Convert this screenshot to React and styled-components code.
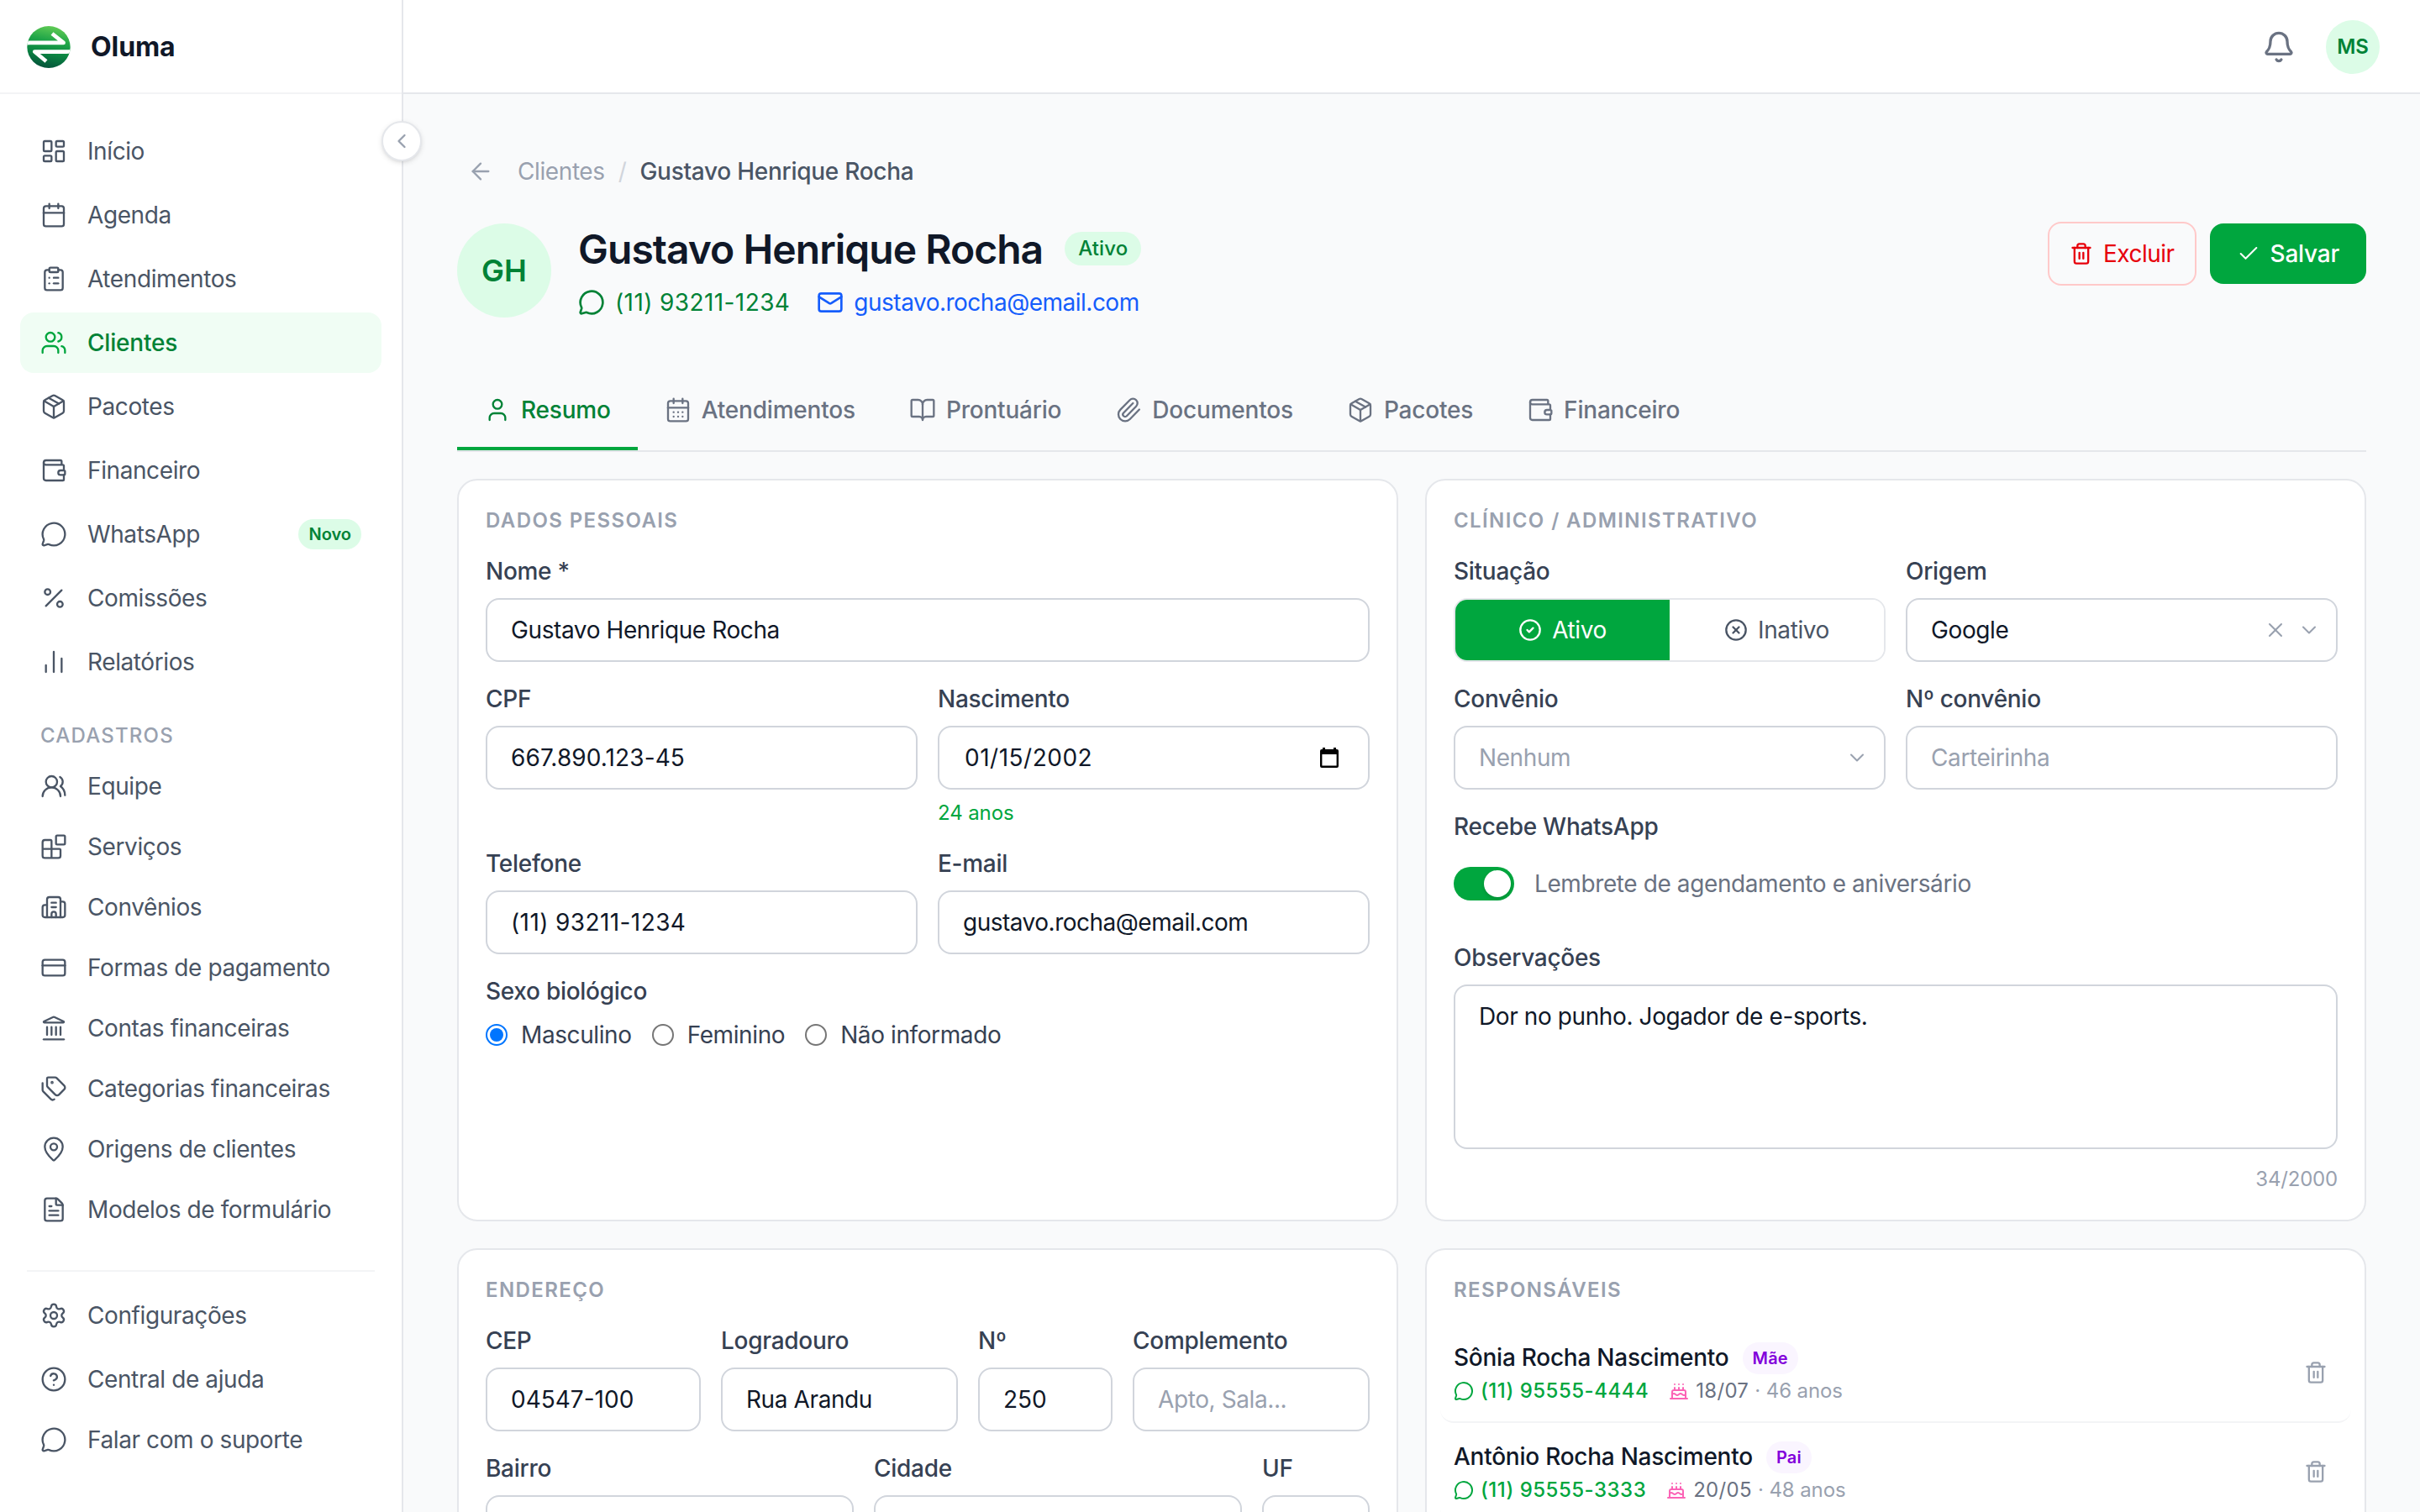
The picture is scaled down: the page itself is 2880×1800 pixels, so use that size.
import React, { useState } from 'react';
import styled, { createGlobalStyle, css } from 'styled-components';
import {
  ArrowLeft,
  Bell,
  Blocks,
  BookOpen,
  Building2,
  Cake,
  Calendar,
  CalendarDays,
  ChartNoAxesColumn,
  Check,
  ChevronDown,
  ChevronLeft,
  CircleCheck,
  CircleHelp,
  CircleX,
  ClipboardList,
  CreditCard,
  FileText,
  Landmark,
  LayoutDashboard,
  Mail,
  MapPin,
  MessageCircle,
  Package,
  Paperclip,
  Percent,
  Settings,
  Tags,
  Trash2,
  User,
  Users,
  UsersRound,
  Wallet,
  X,
} from 'lucide-react';

const Global = createGlobalStyle`
  * {
    box-sizing: border-box;
  }
  body {
    margin: 0;
    overflow: hidden;
    background: #f9fafb;
    color: #101828;
    font-family: Inter, "Liberation Sans", sans-serif;
    font-size: 28px;
    line-height: 40px;
    letter-spacing: -0.4px;
    -webkit-font-smoothing: antialiased;
  }
  button, input, textarea {
    margin: 0;
    font: inherit;
    letter-spacing: inherit;
    color: inherit;
  }
  h1, h2, p {
    margin: 0;
  }
  svg {
    flex-shrink: 0;
  }
`

/* ---------- Sidebar ---------- */

const Layout = styled.div`
  display: grid;
  grid-template-columns: 480px 1fr;
  height: 1800px;
  overflow: hidden;
`
const Sidebar = styled.aside`
  position: relative;
  display: flex;
  flex-direction: column;
  background: #fff;
  border-right: 2px solid #e5e7eb;
`
const Brand = styled.div`
  display: flex;
  align-items: center;
  gap: 24px;
  height: 112px;
  padding: 2px 32px 0;
  border-bottom: 2px solid #f3f4f6;
  font-size: 32px;
  font-weight: 700;
  letter-spacing: -0.1px;
`
const CollapseButton = styled.button`
  position: absolute;
  top: 144px;
  right: -24px;
  z-index: 2;
  display: flex;
  align-items: center;
  justify-content: center;
  width: 48px;
  height: 48px;
  padding: 0;
  border: 2px solid #e5e7eb;
  border-radius: 50%;
  background: #fff;
  color: #99a1af;
  box-shadow: 0 2px 6px rgba(0, 0, 0, 0.1), 0 2px 4px -2px rgba(0, 0, 0, 0.1);
`
const NavList = styled.nav`
  display: flex;
  flex-direction: column;
  gap: ${(props) => props.$gap}px;
  padding: ${(props) => props.$top}px 24px 0;
`
const NavItem = styled.a`
  display: flex;
  align-items: center;
  gap: 24px;
  height: 72px;
  padding: 0 24px;
  border-radius: 16px;
  color: #4a5565;
  ${(props) => props.$active && css`
    background: #f0fdf4;
    color: #008236;
    font-weight: 500;
    letter-spacing: -0.2px;
    & svg {
      color: #00a63e;
    }
  `}
`
const NavBadge = styled.span`
  margin-left: auto;
  padding: 0 12px;
  border-radius: 18px;
  background: #dcfce7;
  color: #008236;
  font-size: 20px;
  font-weight: 600;
  line-height: 36px;
  letter-spacing: 0;
`
const NavHeading = styled.div`
  padding: 36px 48px 8px;
  color: #99a1af;
  font-size: 24px;
  font-weight: 500;
  line-height: 32px;
  letter-spacing: 1.2px;
`
const NavDivider = styled.div`
  height: 2px;
  margin: 36px 32px 0;
  background: #f3f4f6;
`

/* ---------- Header ---------- */

const Content = styled.div`
  display: flex;
  flex-direction: column;
  min-width: 0;
`
const TopBar = styled.header`
  display: flex;
  align-items: center;
  justify-content: flex-end;
  gap: 36px;
  flex-shrink: 0;
  height: 112px;
  padding: 2px 48px 0 0;
  background: #fff;
  border-bottom: 2px solid #e5e7eb;
  color: #6a7282;
`
const Avatar = styled.div`
  display: flex;
  align-items: center;
  justify-content: center;
  flex-shrink: 0;
  width: ${(props) => props.$size}px;
  height: ${(props) => props.$size}px;
  border-radius: 50%;
  background: #dcfce7;
  color: #008236;
  font-size: ${(props) => props.$font}px;
  font-weight: 600;
  letter-spacing: 0;
`
const Main = styled.main`
  padding: 72px 64px 0;
`
const Breadcrumb = styled.div`
  display: flex;
  align-items: center;
  height: 40px;
  padding-left: 12px;
  color: #99a1af;
  & a {
    margin-left: 28px;
  }
  & i {
    margin: 0 16px;
    font-style: normal;
    color: #d1d5dc;
  }
  & strong {
    font-weight: 500;
    letter-spacing: -0.27px;
    color: #4a5565;
  }
`
const ClientHeader = styled.section`
  display: flex;
  align-items: flex-start;
  gap: 32px;
  height: 166px;
  padding-top: 42px;
`
const ClientInfo = styled.div`
  flex: 1;
`
const ClientName = styled.div`
  display: flex;
  align-items: center;
  gap: 26px;
  height: 60px;
  & h1 {
    padding-top: 2px;
    font-size: 48px;
    font-weight: 600;
    line-height: 60px;
    letter-spacing: -0.97px;
  }
`
const StatusPill = styled.span`
  padding: 0 16px;
  border-radius: 20px;
  background: #dcfce7;
  color: #008236;
  font-size: 24px;
  font-weight: 500;
  line-height: 40px;
  letter-spacing: 0.1px;
`
const ContactRow = styled.div`
  display: flex;
  gap: 32px;
  margin-top: 14px;
`
const Contact = styled.a`
  display: flex;
  align-items: center;
  gap: 12px;
  color: ${(props) => props.$color};
  letter-spacing: ${(props) => props.$tracking};
`
const Actions = styled.div`
  display: flex;
  align-items: center;
  gap: 16px;
  height: 76px;
  margin-top: -2px;
`
const Button = styled.button`
  display: flex;
  align-items: center;
  gap: 12px;
  height: 72px;
  padding: 0 32px;
  border: 0;
  border-radius: 16px;
  background: #00a63e;
  color: #fff;
  font-weight: 500;
  letter-spacing: -0.25px;
`
const DangerButton = styled(Button)`
  height: 76px;
  padding: 0 24px;
  border: 2px solid #ffc9c9;
  background: transparent;
  color: #e7000b;
  font-weight: 400;
  letter-spacing: -0.5px;
`
const Tabs = styled.div`
  display: flex;
  height: 90px;
  margin-top: 58px;
  border-bottom: 2px solid #e5e7eb;
`
const Tab = styled.button`
  display: flex;
  align-items: center;
  gap: 12px;
  padding: 0 32px 4px;
  border: 0;
  border-bottom: 4px solid ${(props) => (props.$active ? '#00a63e' : 'transparent')};
  background: none;
  color: ${(props) => (props.$active ? '#008236' : '#6a7282')};
  font-weight: 500;
  letter-spacing: -0.2px;
`

/* ---------- Cards and fields ---------- */

const Cards = styled.div`
  display: grid;
  grid-template-columns: 1fr 1fr;
  gap: 32px;
  margin-top: 32px;
`
const Card = styled.section`
  padding: 32px;
  border: 2px solid #e5e7eb;
  border-radius: 24px;
  background: #fff;
`
const CardTitle = styled.h2`
  margin-bottom: 24px;
  color: #99a1af;
  font-size: 24px;
  font-weight: 600;
  line-height: 32px;
  letter-spacing: 1.4px;
`
const Row = styled.div`
  display: grid;
  grid-template-columns: ${(props) => props.$cols || '1fr'};
  gap: 24px;
  & + & {
    margin-top: 24px;
  }
`
const Field = styled.div`
  display: flex;
  flex-direction: column;
  gap: 12px;
  min-width: 0;
`
const Label = styled.label`
  color: #364153;
  font-weight: 500;
  letter-spacing: -0.28px;
`
const fieldBox = css`
  width: 100%;
  height: 76px;
  padding: 0 28px;
  border: 2px solid #d1d5dc;
  border-radius: 16px;
  background: #fff;
  outline: none;
`
const Input = styled.input`
  ${fieldBox}
  letter-spacing: ${(props) => props.$tracking || '-0.4px'};
  &::placeholder {
    color: #99a1af;
    opacity: 1;
  }
`
const DateBox = styled.div`
  ${fieldBox}
  display: flex;
  align-items: center;
  justify-content: space-between;
  padding: 0 35px 0 30px;
  letter-spacing: 0.5px;
`
const SelectBox = styled.div`
  ${fieldBox}
  display: flex;
  align-items: center;
  gap: 12px;
  padding-right: 18px;
  & span {
    flex: 1;
    color: ${(props) => (props.$empty ? '#99a1af' : '#101828')};
  }
  & svg {
    color: #99a1af;
  }
`
const Hint = styled.p`
  color: #00a63e;
  font-size: 24px;
  line-height: 32px;
  letter-spacing: -0.1px;
`
const RadioGroup = styled.div`
  display: flex;
  gap: 24px;
  color: #364153;
  & label {
    display: flex;
    align-items: center;
    gap: 16px;
  }
`
const Radio = styled.input`
  appearance: none;
  width: 26px;
  height: 26px;
  border: 2px solid #767676;
  border-radius: 50%;
  background: #fff;
  &:checked {
    padding: 3px;
    border-color: #0075ff;
    background: #0075ff content-box;
  }
`
const Segmented = styled.div`
  display: grid;
  grid-template-columns: 1fr 1fr;
  height: 76px;
  overflow: hidden;
  border: 2px solid #e5e7eb;
  border-radius: 16px;
`
const Segment = styled.button`
  display: flex;
  align-items: center;
  justify-content: center;
  gap: 12px;
  padding: 0;
  border: 0;
  background: ${(props) => (props.$on ? '#00a63e' : '#fff')};
  color: ${(props) => (props.$on ? '#fff' : '#4a5565')};
`
const SwitchRow = styled.div`
  display: flex;
  align-items: center;
  gap: 24px;
  height: 72px;
  margin-bottom: 8px;
  color: #6a7282;
`
const Switch = styled.button`
  display: flex;
  justify-content: ${(props) => (props.$on ? 'flex-end' : 'flex-start')};
  width: 72px;
  height: 40px;
  padding: 4px;
  border: 0;
  border-radius: 20px;
  background: ${(props) => (props.$on ? '#00a63e' : '#d1d5dc')};
  & span {
    width: 32px;
    height: 32px;
    border-radius: 50%;
    background: #fff;
    box-shadow: 0 2px 4px rgba(0, 0, 0, 0.15);
  }
`
const TextArea = styled.textarea`
  ${fieldBox}
  display: block;
  height: 196px;
  padding: 16px 28px;
  resize: none;
`
const Counter = styled.p`
  margin-top: 20px;
  color: #99a1af;
  font-size: 24px;
  line-height: 32px;
  letter-spacing: -0.2px;
  text-align: right;
`

/* ---------- Guardians ---------- */

const Guardian = styled.div`
  display: flex;
  align-items: center;
  justify-content: space-between;
  margin: 0 -16px;
  padding: 20px 28px 20px 16px;
  border-bottom: 2px solid #f3f4f6;
  border-radius: 16px;
  & > svg {
    color: #99a1af;
  }
`
const GuardianName = styled.div`
  display: flex;
  align-items: center;
  gap: 16px;
  height: 40px;
  font-weight: 500;
  letter-spacing: -0.25px;
`
const KinPill = styled.span`
  margin-top: 2px;
  padding: 0 12px;
  border-radius: 19px;
  background: #faf5ff;
  color: #8200db;
  font-size: 20px;
  font-weight: 600;
  line-height: 38px;
  letter-spacing: 0.2px;
`
const GuardianMeta = styled.div`
  display: flex;
  align-items: center;
  gap: 8px;
  height: 32px;
  margin-top: 4px;
  color: #6a7282;
  font-size: 24px;
  line-height: 32px;
  letter-spacing: 0.3px;
  & a {
    display: flex;
    align-items: center;
    gap: 8px;
    margin-right: 16px;
    color: #00a63e;
    font-weight: 500;
    letter-spacing: 0.5px;
  }
  & > svg {
    color: #fb64b6;
  }
  & em {
    font-style: normal;
    letter-spacing: -0.1px;
    color: #99a1af;
  }
`

const Logo = () => (
  <svg width="52" height="52" viewBox="0 0 52 52" fill="none">
    <defs>
      <linearGradient id="logo" x1="32" y1="1" x2="22" y2="51" gradientUnits="userSpaceOnUse">
        <stop offset="0" stopColor="#62cc55" />
        <stop offset="0.35" stopColor="#1fa548" />
        <stop offset="0.65" stopColor="#0b8542" />
        <stop offset="1" stopColor="#04533a" />
      </linearGradient>
      <clipPath id="disc">
        <ellipse cx="26" cy="26" rx="25.7" ry="25" />
      </clipPath>
    </defs>
    <ellipse cx="26" cy="26" rx="25.7" ry="25" fill="url(#logo)" />
    <g clipPath="url(#disc)" stroke="#fff" strokeWidth="4.6" strokeLinejoin="round">
      <path d="M-2 21.6C0 20.9 2 20.9 4 20.9H43.6L30 10" />
      <path d="M54 30.8C51 31.6 49 31.6 47 31.6H9.2L23 43" />
    </g>
  </svg>
);

const DateIcon = () => (
  <svg width="22" height="24" viewBox="0 0 22 24">
    <path
      fill="#000"
      fillRule="evenodd"
      d="M3 0h3v2h10V0h3v2h1a2 2 0 0 1 2 2v18a2 2 0 0 1-2 2H2a2 2 0 0 1-2-2V4a2 2 0 0 1 2-2h1zM2.4 8v13.6h17.2V8z"
    />
  </svg>
);

const mainNav = [
  { icon: LayoutDashboard, text: 'Início' },
  { icon: Calendar, text: 'Agenda' },
  { icon: ClipboardList, text: 'Atendimentos' },
  { icon: Users, text: 'Clientes', active: true },
  { icon: Package, text: 'Pacotes' },
  { icon: Wallet, text: 'Financeiro' },
  { icon: MessageCircle, text: 'WhatsApp', badge: 'Novo' },
  { icon: Percent, text: 'Comissões' },
  { icon: ChartNoAxesColumn, text: 'Relatórios' },
];
const recordsNav = [
  { icon: UsersRound, text: 'Equipe' },
  { icon: Blocks, text: 'Serviços' },
  { icon: Building2, text: 'Convênios' },
  { icon: CreditCard, text: 'Formas de pagamento' },
  { icon: Landmark, text: 'Contas financeiras' },
  { icon: Tags, text: 'Categorias financeiras' },
  { icon: MapPin, text: 'Origens de clientes' },
  { icon: FileText, text: 'Modelos de formulário' },
];
const helpNav = [
  { icon: CircleHelp, text: 'Central de ajuda' },
  { icon: MessageCircle, text: 'Falar com o suporte' },
];
const tabs = [
  { icon: User, text: 'Resumo' },
  { icon: CalendarDays, text: 'Atendimentos' },
  { icon: BookOpen, text: 'Prontuário' },
  { icon: Paperclip, text: 'Documentos' },
  { icon: Package, text: 'Pacotes' },
  { icon: Wallet, text: 'Financeiro' },
];
const guardians = [
  { name: 'Sônia Rocha Nascimento', kin: 'Mãe', phone: '(11) 95555-4444', birthday: '18/07', age: 46 },
  { name: 'Antônio Rocha Nascimento', kin: 'Pai', phone: '(11) 95555-3333', birthday: '20/05', age: 48 },
];

const Nav = ({ items, gap = 0, top = 0 }) => (
  <NavList $gap={gap} $top={top}>
    {items.map(({ icon: Icon, text, active, badge }) => (
      <NavItem key={text} $active={active}>
        <Icon size={32} strokeWidth={1.75} />
        <span>{text}</span>
        {badge && <NavBadge>{badge}</NavBadge>}
      </NavItem>
    ))}
  </NavList>
);

const TextField = ({ label, value, placeholder, tracking }) => (
  <Field>
    <Label>{label}</Label>
    <Input defaultValue={value} placeholder={placeholder} $tracking={tracking} />
  </Field>
);

const App = () => {
  const [tab, setTab] = useState('Resumo');
  const [active, setActive] = useState(true);
  const [whatsapp, setWhatsapp] = useState(true);
  const [notes, setNotes] = useState('Dor no punho. Jogador de e-sports.');

  return (
    <>
      <Global />
      <Layout>
        <Sidebar>
          <Brand>
            <Logo />
            Oluma
          </Brand>
          <CollapseButton>
            <ChevronLeft size={28} />
          </CollapseButton>
          <Nav items={mainNav} gap={4} top={32} />
          <NavHeading>CADASTROS</NavHeading>
          <Nav items={recordsNav} />
          <NavDivider />
          <Nav items={[{ icon: Settings, text: 'Configurações' }]} top={16} />
          <Nav items={helpNav} top={4} />
        </Sidebar>

        <Content>
          <TopBar>
            <Bell size={40} />
            <Avatar $size={64} $font={24}>MS</Avatar>
          </TopBar>
          <Main>
            <Breadcrumb>
              <ArrowLeft size={32} strokeWidth={1.75} />
              <a>Clientes</a>
              <i>/</i>
              <strong>Gustavo Henrique Rocha</strong>
            </Breadcrumb>

            <ClientHeader>
              <Avatar $size={112} $font={36}>GH</Avatar>
              <ClientInfo>
                <ClientName>
                  <h1>Gustavo Henrique Rocha</h1>
                  <StatusPill>Ativo</StatusPill>
                </ClientName>
                <ContactRow>
                  <Contact $color="#008236" $tracking="0.4px">
                    <MessageCircle size={32} />
                    (11) 93211-1234
                  </Contact>
                  <Contact $color="#155dfc" $tracking="-0.5px">
                    <Mail size={32} />
                    gustavo.rocha@email.com
                  </Contact>
                </ContactRow>
              </ClientInfo>
              <Actions>
                <DangerButton>
                  <Trash2 size={28} />
                  Excluir
                </DangerButton>
                <Button>
                  <Check size={28} strokeWidth={1.75} />
                  Salvar
                </Button>
              </Actions>
            </ClientHeader>

            <Tabs>
              {tabs.map(({ icon: Icon, text }) => (
                <Tab key={text} $active={tab === text} onClick={() => setTab(text)}>
                  <Icon size={32} strokeWidth={1.75} />
                  {text}
                </Tab>
              ))}
            </Tabs>

            <Cards>
              <Card>
                <CardTitle>DADOS PESSOAIS</CardTitle>
                <Row>
                  <TextField label="Nome *" value="Gustavo Henrique Rocha" />
                </Row>
                <Row $cols="1fr 1fr">
                  <TextField label="CPF" value="667.890.123-45" tracking="0.1px" />
                  <Field>
                    <Label>Nascimento</Label>
                    <DateBox>
                      01/15/2002
                      <DateIcon />
                    </DateBox>
                    <Hint>24 anos</Hint>
                  </Field>
                </Row>
                <Row $cols="1fr 1fr">
                  <TextField label="Telefone" value="(11) 93211-1234" tracking="0.4px" />
                  <TextField label="E-mail" value="gustavo.rocha@email.com" tracking="-0.5px" />
                </Row>
                <Row>
                  <Field>
                    <Label>Sexo biológico</Label>
                    <RadioGroup>
                      {['Masculino', 'Feminino', 'Não informado'].map((v, i) => (
                        <label key={v}>
                          <Radio type="radio" name="sexo" defaultChecked={i === 0} />
                          {v}
                        </label>
                      ))}
                    </RadioGroup>
                  </Field>
                </Row>
              </Card>

              <Card>
                <CardTitle>CLÍNICO / ADMINISTRATIVO</CardTitle>
                <Row $cols="1fr 1fr">
                  <Field>
                    <Label>Situação</Label>
                    <Segmented>
                      <Segment $on={active} onClick={() => setActive(true)}>
                        <CircleCheck size={28} />
                        Ativo
                      </Segment>
                      <Segment $on={!active} onClick={() => setActive(false)}>
                        <CircleX size={28} />
                        Inativo
                      </Segment>
                    </Segmented>
                  </Field>
                  <Field>
                    <Label>Origem</Label>
                    <SelectBox>
                      <span>Google</span>
                      <X size={28} strokeWidth={1.75} />
                      <ChevronDown size={28} strokeWidth={1.75} />
                    </SelectBox>
                  </Field>
                </Row>
                <Row $cols="1fr 1fr">
                  <Field>
                    <Label>Convênio</Label>
                    <SelectBox $empty>
                      <span>Nenhum</span>
                      <ChevronDown size={28} strokeWidth={1.75} />
                    </SelectBox>
                  </Field>
                  <TextField label="Nº convênio" placeholder="Carteirinha" />
                </Row>
                <Row>
                  <Field>
                    <Label>Recebe WhatsApp</Label>
                    <SwitchRow>
                      <Switch $on={whatsapp} onClick={() => setWhatsapp(!whatsapp)}>
                        <span />
                      </Switch>
                      Lembrete de agendamento e aniversário
                    </SwitchRow>
                  </Field>
                </Row>
                <Row>
                  <Field>
                    <Label>Observações</Label>
                    <TextArea value={notes} onChange={(e) => setNotes(e.target.value)} />
                  </Field>
                </Row>
                <Counter>{notes.length}/2000</Counter>
              </Card>

              <Card>
                <CardTitle>ENDEREÇO</CardTitle>
                <Row $cols="256px 1fr 160px 1fr">
                  <TextField label="CEP" value="04547-100" tracking="0" />
                  <TextField label="Logradouro" value="Rua Arandu" />
                  <TextField label="Nº" value="250" tracking="0" />
                  <TextField label="Complemento" placeholder="Apto, Sala..." />
                </Row>
                <Row $cols="1fr 1fr 128px">
                  <TextField label="Bairro" />
                  <TextField label="Cidade" />
                  <TextField label="UF" />
                </Row>
              </Card>

              <Card>
                <CardTitle>RESPONSÁVEIS</CardTitle>
                {guardians.map((g) => (
                  <Guardian key={g.name}>
                    <div>
                      <GuardianName>
                        {g.name}
                        <KinPill>{g.kin}</KinPill>
                      </GuardianName>
                      <GuardianMeta>
                        <a>
                          <MessageCircle size={24} />
                          {g.phone}
                        </a>
                        <Cake size={24} />
                        <span>
                          {g.birthday} <em>· {g.age} anos</em>
                        </span>
                      </GuardianMeta>
                    </div>
                    <Trash2 size={28} />
                  </Guardian>
                ))}
              </Card>
            </Cards>
          </Main>
        </Content>
      </Layout>
    </>
  );
};

export default App;
